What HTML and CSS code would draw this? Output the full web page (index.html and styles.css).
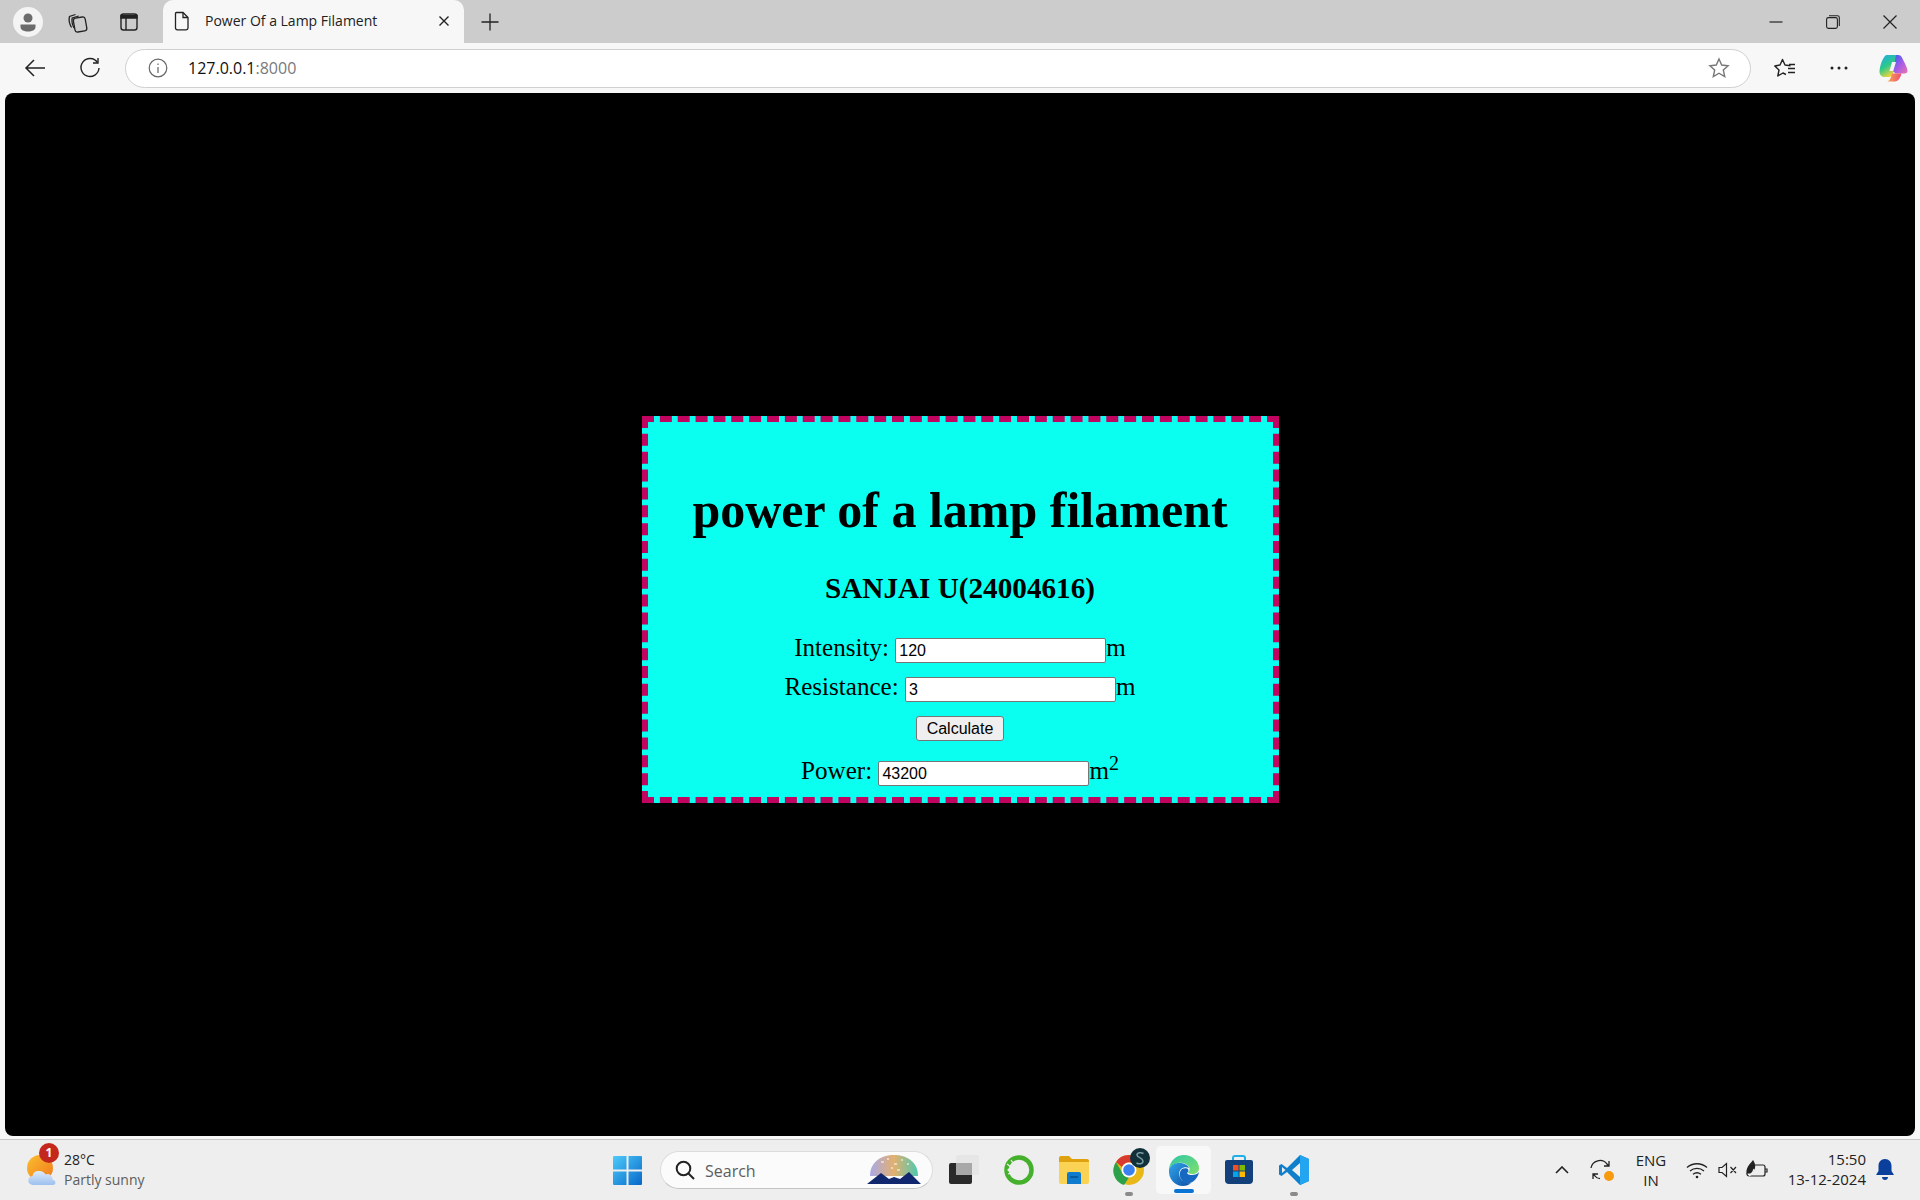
FILE: index.html
```html
<!DOCTYPE html>
<html lang="en">

<head>
  <meta charset="UTF-8">
  <title>Power Of a Lamp Filament</title>
  <link rel="stylesheet" href="styles.css">
</head>

<body>
  <div class="tabbar">
    <div class="avatar">
      <svg width="30" height="30" viewBox="0 0 30 30"><circle cx="15" cy="15" r="15" fill="#f4f4f4"/><circle cx="15" cy="11" r="4.5" fill="#6b6b6b"/><path d="M7.5 17.5h15v2.5c0 3-3.500 4.500-7.500 4.500s-7.500-1.500-7.500-4.500z" fill="#6b6b6b"/></svg>
    </div>
    <div class="tab-tool">
      <svg width="24" height="24" viewBox="0 0 24 24" fill="none" stroke="#222" stroke-width="1.300"><rect x="9" y="7.500" width="12" height="14" rx="2.500" transform="rotate(-10 15 14)"/><path d="M6.500 17.500C4.500 14 3.500 10 4.500 6.500l6-2M9 18c-1.500-3-2.500-7-1.800-10l6.500-2"/></svg>
    </div>
    <div class="tab-tool">
      <svg width="20" height="20" viewBox="0 0 20 20" fill="none" stroke="#222" stroke-width="1.400"><rect x="2" y="2" width="16" height="16" rx="2.500"/><path d="M2 3.500h16V6H2z" fill="#222"/><path d="M7 6v12"/></svg>
    </div>
    <div class="tab">
      <svg class="tab-icon" width="16" height="20" viewBox="0 0 16 20" fill="none" stroke="#222" stroke-width="1.300"><path d="M2.500 1.500h6.500l5 5v10.500a1.800 1.800 0 0 1-1.800 1.800H3.300A1.800 1.800 0 0 1 1.500 17V2.500a1 1 0 0 1 1-1z"/><path d="M9 1.500v5h5"/></svg>
      <span class="tab-title">Power Of a Lamp Filament</span>
      <svg width="12" height="12" viewBox="0 0 12 12" stroke="#222" stroke-width="1.400"><path d="M1.500 1.500l9 9M10.500 1.500l-9 9"/></svg>
    </div>
    <div class="new-tab">
      <svg width="18" height="18" viewBox="0 0 18 18" stroke="#222" stroke-width="1.300"><path d="M9 0.500v17M0.500 9h17"/></svg>
    </div>
    <div class="window-btns">
      <div class="window-btn"><svg width="14" height="14" viewBox="0 0 14 14" stroke="#222" stroke-width="1.200"><path d="M0.500 7h13"/></svg></div>
      <div class="window-btn"><svg width="14" height="14" viewBox="0 0 14 14" fill="none" stroke="#222" stroke-width="1.100"><rect x="0.600" y="2.600" width="10.800" height="10.800" rx="1.800"/><path d="M3 0.700h8.500a1.800 1.800 0 0 1 1.800 1.800V11"/></svg></div>
      <div class="window-btn"><svg width="14" height="14" viewBox="0 0 14 14" stroke="#222" stroke-width="1.200"><path d="M0.500 0.500l13 13M13.500 0.500l-13 13"/></svg></div>
    </div>
  </div>

  <div class="toolbar">
    <div class="nav-btn">
      <svg width="22" height="20" viewBox="0 0 22 20" fill="none" stroke="#222" stroke-width="1.500"><path d="M21 10H2M10 2l-8 8 8 8"/></svg>
    </div>
    <div class="nav-btn">
      <svg width="22" height="22" viewBox="0 0 22 22" fill="none" stroke="#222" stroke-width="1.400"><path d="M18.500 5.500A9 9 0 1 0 20 11"/><path d="M19 1v5h-5"/></svg>
    </div>
    <div class="address">
      <svg class="info-icon" width="20" height="20" viewBox="0 0 20 20" fill="none" stroke="#666" stroke-width="1.200"><circle cx="10" cy="10" r="8.800"/><path d="M10 9v6M10 5.500v1.500"/></svg>
      <span class="url">127.0.0.1<span class="port">:8000</span></span>
      <svg class="star" width="22" height="22" viewBox="0 0 22 22" fill="none" stroke="#777" stroke-width="1.400"><path d="M11 2l2.700 6 6.400.7-4.800 4.300 1.400 6.500L11 16.200 5.300 19.500l1.400-6.500L1.900 8.700 8.300 8z"/></svg>
    </div>
    <div class="tool-btn fav-btn">
      <svg width="22" height="20" viewBox="0 0 22 20" fill="none" stroke="#222" stroke-width="1.400"><path d="M16.500 7.700L11 7 8.500 1.500 6 7 .8 8 5 12l-1.200 6L9 15l3 1.500" stroke-linejoin="round"/><path d="M15 6.500h6M14 10.500h7M14 14.500h7"/></svg>
    </div>
    <div class="tool-btn">
      <svg width="18" height="4" viewBox="0 0 18 4" fill="#222"><circle cx="2" cy="2" r="1.500"/><circle cx="9" cy="2" r="1.500"/><circle cx="16" cy="2" r="1.500"/></svg>
    </div>
    <div class="tool-btn">
      <svg width="29" height="28" viewBox="0 0 29 28">
        <defs>
          <linearGradient id="cpa" x1="0" y1="0" x2="0.500" y2="1"><stop offset="0" stop-color="#1fa8f0"/><stop offset="0.550" stop-color="#2cc98a"/><stop offset="1" stop-color="#f2d43a"/></linearGradient>
          <linearGradient id="cpb" x1="0" y1="0" x2="1" y2="1"><stop offset="0" stop-color="#2a62ee"/><stop offset="0.500" stop-color="#a25be8"/><stop offset="1" stop-color="#ee72b0"/></linearGradient>
          <linearGradient id="cpc" x1="0" y1="0" x2="1" y2="0"><stop offset="0" stop-color="#f8a84a"/><stop offset="1" stop-color="#ee4f78"/></linearGradient>
        </defs>
        <path d="M8 1h10.500L14 20c-.6 2-2 3-4 3H6c-3.500 0-5.500-2-5.500-5.500C.5 14 2 9 3.500 6 5 3 6 1 8 1z" fill="url(#cpa)"/>
        <path d="M17 1h2c2 0 3.500 1 4.500 3.500 1.500 3.500 5 9 5 12.500 0 1.500-1 2.500-3 2.500h-9L14 17z" fill="url(#cpb)"/>
        <path d="M13 19.500h9.500c-1 4-3 8-6.500 8H8c2.500-.5 4-3 5-8z" fill="url(#cpc)"/>
        <path d="M13 8h4l-2.800 9H10.500z" fill="#f4f4f4"/>
      </svg>
    </div>
  </div>

  <div class="viewport">
    <div class="card">
      <h1>power of a lamp filament</h1>
      <h3>SANJAI U(24004616)</h3>
      <form class="calc">
        <div class="row">
          <label>Intensity:</label> <input type="text" value="120">m
        </div>
        <div class="row">
          <label>Resistance:</label> <input type="text" value="3">m
        </div>
        <div class="row">
          <button type="button">Calculate</button>
        </div>
        <div class="row row-result">
          <label>Power:</label> <input type="text" value="43200">m<sup>2</sup>
        </div>
      </form>
    </div>
  </div>

  <div class="taskbar">
    <div class="weather">
      <div class="weather-icon">
        <svg width="30" height="32" viewBox="0 0 30 32">
          <defs>
            <linearGradient id="sun" x1="0" y1="0" x2="1" y2="1"><stop offset="0" stop-color="#fbbf2e"/><stop offset="1" stop-color="#f0781e"/></linearGradient>
            <linearGradient id="cloud" x1="0" y1="0" x2="0" y2="1"><stop offset="0" stop-color="#dfeafa"/><stop offset="1" stop-color="#9cc0ee"/></linearGradient>
          </defs>
          <circle cx="13" cy="14" r="13" fill="url(#sun)"/>
          <path d="M6 31a4.500 4.500 0 0 1-.5-9 6 6 0 0 1 6-5 7 7 0 0 1 7 3.500 5 5 0 0 1 7 5c2 .5 3 2 3 3 0 1.500-1 2.500-2.500 2.500z" fill="url(#cloud)"/>
        </svg>
        <span class="badge">1</span>
      </div>
      <div class="weather-text">
        <div class="temp">28°C</div>
        <div class="sky">Partly sunny</div>
      </div>
    </div>

    <div class="task-center">
      <div class="task-icon">
        <svg width="29" height="29" viewBox="0 0 29 29">
          <defs><linearGradient id="win" x1="0" y1="0" x2="1" y2="1"><stop offset="0" stop-color="#4fcbfa"/><stop offset="1" stop-color="#0668c9"/></linearGradient></defs>
          <path d="M1 0h12.500v13.500H0V1a1 1 0 0 1 1-1zM15.500 0H28a1 1 0 0 1 1 1v12.500H15.500zM0 15.500h13.500V29H1a1 1 0 0 1-1-1zM15.500 15.500H29V28a1 1 0 0 1-1 1H15.500z" fill="url(#win)"/>
        </svg>
      </div>
      <div class="search">
        <svg width="20" height="20" viewBox="0 0 20 20" fill="none" stroke="#222" stroke-width="2"><circle cx="8.500" cy="8.500" r="6.800"/><path d="M13.500 13.500l5.500 5.500"/></svg>
        <span class="search-text">Search</span>
        <svg class="search-art" width="54" height="32" viewBox="0 0 54 32">
          <defs><linearGradient id="art" x1="0" y1="0" x2="1" y2="0"><stop offset="0" stop-color="#a9a8e8"/><stop offset="0.500" stop-color="#e3b06e"/><stop offset="1" stop-color="#4ec9b0"/></linearGradient></defs>
          <path d="M3 22C3 8 14 1 27 1s24 7 24 21z" fill="url(#art)"/>
          <path d="M0 30L14 19l8 6 5-2 6 2 9-7 12 12z" fill="#12286e"/>
          <path d="M14 8h3M20 5h2M27 10h3M34 6h2M40 10h2M24 14h2M30 16h3" stroke="#fff" stroke-width="1"/>
        </svg>
      </div>
      <div class="task-icon task-view">
        <svg width="30" height="30" viewBox="0 0 30 30"><rect x="0" y="8" width="23" height="21" rx="2" fill="#2a2a2a"/><rect x="7" y="0" width="23" height="20" rx="2" fill="#e4e4e4" opacity="0.900"/><rect x="7" y="8" width="16" height="12" fill="#a8a8a8"/></svg>
      </div>
      <div class="task-icon">
        <svg width="30" height="30" viewBox="0 0 30 30" fill="none"><circle cx="15" cy="15" r="12.500" stroke="#44b02c" stroke-width="4.500"/><path d="M3 9l4 3-3 3 3 3-3 1M7 5l2 3" stroke="#eee" stroke-width="1.300"/></svg>
      </div>
      <div class="task-icon">
        <svg width="30" height="28" viewBox="0 0 30 28"><path d="M0 2a2 2 0 0 1 2-2h8l3 3h15a2 2 0 0 1 2 2v3H0z" fill="#dfa10d"/><path d="M0 6h30v20a2 2 0 0 1-2 2H2a2 2 0 0 1-2-2z" fill="#fbd354"/><path d="M8 18a2 2 0 0 1 2-2h10a2 2 0 0 1 2 2v10H8z" fill="#0f7bcf"/><path d="M11 21h8" stroke="#0a4f8f" stroke-width="1.500"/></svg>
      </div>
      <div class="task-icon chrome-icon">
        <svg width="32" height="32" viewBox="0 0 32 32">
          <circle cx="16" cy="16" r="15" fill="#e8b818"/>
          <path d="M16 1a15 15 0 0 1 13 7.500H16a7.500 7.500 0 0 0-7 4.500L3 8A15 15 0 0 1 16 1z" fill="#d93a2e"/>
          <path d="M3 8l6.500 11.300A7.500 7.500 0 0 0 16 23.500L11 31A15 15 0 0 1 3 8z" fill="#2ba24a"/>
          <circle cx="16" cy="16" r="7.500" fill="#fff"/><circle cx="16" cy="16" r="5.800" fill="#3a80ee"/>
        </svg>
        <svg class="chrome-badge" width="20" height="20" viewBox="0 0 20 20"><circle cx="10" cy="10" r="10" fill="#12303a"/><path d="M13.500 5.500C11 4 7 4.500 7 7s6 3 6 6-4 3.500-6.500 2" fill="none" stroke="#7a9ca6" stroke-width="1.500"/></svg>
        <span class="running"></span>
      </div>
      <div class="task-icon active">
        <svg width="31" height="31" viewBox="0 0 31 31">
          <defs>
            <linearGradient id="ega" x1="0" y1="0" x2="1" y2="1"><stop offset="0" stop-color="#2fc6a8"/><stop offset="1" stop-color="#7fe06a"/></linearGradient>
            <linearGradient id="egb" x1="0" y1="0" x2="1" y2="1"><stop offset="0" stop-color="#32a6e8"/><stop offset="1" stop-color="#0a4fa8"/></linearGradient>
          </defs>
          <path d="M1 14C2 6 8 0 16 0c8 0 15 6 15 13 0 4-3 6-7 6-2 0-4-1-4-2 2-1 2-3 1-5-2-3-6-5-11-4-4 1-8 3-9 6z" fill="url(#ega)"/>
          <path d="M1 14c2-4 6-6 10-6 5 0 9 2 10 5-2-1-6-1-8 1-3 3-2 8 1 11 2 2 5 4 9 3-2 2-5 3-8 3C7 31 0 24 1 14z" fill="url(#egb)"/>
          <path d="M14 25c-3-3-3-8 0-11 2-1 5-1 6 0 1 2 0 3-1 4 1 2 3 2 5 2 3 0 6-1 7-3-1 7-8 13-14 11-1 0-2-1-3-3z" fill="#1668c0"/>
        </svg>
        <span class="running running-active"></span>
      </div>
      <div class="task-icon">
        <svg width="30" height="30" viewBox="0 0 30 30">
          <path d="M9 6V3a2 2 0 0 1 2-2h8a2 2 0 0 1 2 2v3" fill="none" stroke="#1fb0e8" stroke-width="2"/>
          <path d="M1 7a2 2 0 0 1 2-2h24a2 2 0 0 1 2 2v18a4 4 0 0 1-4 4H5a4 4 0 0 1-4-4z" fill="#12407a"/>
          <rect x="9" y="10" width="5.500" height="5.500" fill="#f25022"/><rect x="15.500" y="10" width="5.500" height="5.500" fill="#7fba00"/><rect x="9" y="16.500" width="5.500" height="5.500" fill="#00a4ef"/><rect x="15.500" y="16.500" width="5.500" height="5.500" fill="#ffb900"/>
        </svg>
      </div>
      <div class="task-icon">
        <svg width="30" height="30" viewBox="0 0 30 30">
          <path d="M21 0l9 4v22l-9 4L8 17l-5.500 4L0 19.500v-9L2.500 9 8 13z" fill="#0f7fcb"/>
          <path d="M21 0l9 4v22l-9 4z" fill="#23a6ef"/>
          <path d="M21 8l-8 7 8 7z" fill="#eee"/>
          <path d="M3 12l3.500 3L3 18z" fill="#eee"/>
        </svg>
        <span class="running"></span>
      </div>
    </div>

    <div class="tray">
      <svg class="tray-chevron" width="14" height="8" viewBox="0 0 14 8" fill="none" stroke="#222" stroke-width="1.600"><path d="M1 7l6-6 6 6"/></svg>
      <div class="tray-sync">
        <svg width="22" height="22" viewBox="0 0 22 22" fill="none" stroke="#222" stroke-width="1.300"><path d="M1 9a9 9 0 0 1 16-4l2 2M19 2v5h-5M3 15l2 2c1 1.500 3 2.500 5 2.700M3 20v-5h5"/></svg>
        <span class="sync-dot"></span>
      </div>
      <div class="lang">ENG<br>IN</div>
      <svg class="tray-icon wifi" width="22" height="18" viewBox="0 0 22 18" fill="none" stroke="#222" stroke-width="1.300"><path d="M1 6.500c5.500-5 14.500-5 20 0M4 10c4-3.500 10-3.500 14 0M7 13.200c2.500-1.800 5.500-1.800 8 0"/><circle cx="11" cy="16" r="1.300" fill="#222" stroke="none"/></svg>
      <svg class="tray-icon mute" width="20" height="16" viewBox="0 0 20 16" fill="none" stroke="#222" stroke-width="1.200"><path d="M1 5.500h3l4.500-4v13l-4.500-4H1zM12.500 5l5.500 6M18 5l-5.500 6"/></svg>
      <svg class="tray-icon battery" width="22" height="20" viewBox="0 0 22 20" fill="none" stroke="#222" stroke-width="1.200"><path d="M9 5h8a2 2 0 0 1 2 2v7a2 2 0 0 1-2 2H3a2 2 0 0 1-2-2v-1M19.500 9h1.500v3h-1.500"/><path d="M1 12C1 6 5 4 7 1c2 3 2 7 0 10l-3 2h-3z" fill="#222"/><path d="M3 16c2-1 4-4 5-7" stroke="#eee"/></svg>
      <div class="clock">
        <div>15:50</div>
        <div>13-12-2024</div>
      </div>
      <svg class="bell" width="18" height="22" viewBox="0 0 18 22"><path d="M9 0c4 0 6.500 3 6.500 7v5l2.500 4H0l2.500-4V7C2.500 3 5 0 9 0z" fill="#0b3f9c"/><path d="M6 18h6c0 1.800-1.300 3-3 3s-3-1.200-3-3z" fill="#0b3f9c"/></svg>
    </div>
  </div>
</body>

</html>
```

FILE: styles.css
```css
* {
  padding: 0;
  margin: 0;
  box-sizing: border-box;
}

html,
body {
  height: 100%;
}

body {
  width: 1920px;
  height: 1200px;
  display: flex;
  flex-direction: column;
  overflow: hidden;
  background: #f7f7f7;
  font-family: "Open Sans", "Noto Sans", sans-serif;
  color: #222;
}

svg {
  display: block;
  flex: none;
}

/* browser tabs */
.tabbar {
  height: 43px;
  display: flex;
  align-items: center;
  background: #cccccc;
  padding: 0 2px 0 13px;
}

.avatar {
  width: 30px;
}

.tab-tool {
  width: 52px;
  margin-left: 8px;
  display: flex;
  justify-content: center;
}

.tab-tool+.tab-tool {
  margin-left: 0;
}

.tab {
  width: 301px;
  height: 43px;
  margin-left: 8px;
  padding: 0 14px 2px 11px;
  display: flex;
  align-items: center;
  background: #f7f7f7;
  border-radius: 10px 10px 0 0;
  font-size: 14px;
}

.tab-title {
  flex: 1;
  margin-left: 15px;
}

.new-tab {
  margin-left: 17px;
}

.window-btns {
  margin-left: auto;
  display: flex;
}

.window-btn {
  width: 57px;
  display: flex;
  justify-content: center;
}

/* address bar row */
.toolbar {
  height: 50px;
  display: flex;
  align-items: center;
  padding-left: 13px;
  background: #f7f7f7;
}

.nav-btn {
  flex: none;
  width: 44px;
  margin-right: 11px;
  display: flex;
  justify-content: center;
}

.address {
  flex: none;
  width: 1626px;
  height: 39px;
  margin-left: 2px;
  display: flex;
  align-items: center;
  padding: 0 20px 0 22px;
  background: #fff;
  border: 1px solid #d0d0d0;
  border-radius: 20px;
}

.url {
  margin-left: 20px;
  font-family: "Open Sans", sans-serif;
  font-size: 16px;
  color: #111;
}

.port {
  color: #77797c;
}

.star {
  margin-left: auto;
}

.tool-btn {
  flex: none;
  width: 54px;
  display: flex;
  justify-content: center;
}

.fav-btn {
  margin-left: 7px;
}

/* the page itself */
.viewport {
  flex: 1;
  margin: 0 5px 3px;
  padding-bottom: 11px;
  display: flex;
  align-items: center;
  justify-content: center;
  background: #000;
  border-radius: 8px;
}

.card {
  width: 637px;
  height: 387px;
  padding-top: 59px;
  background: #0afff0;
  border: 6px dashed #c0045f;
  text-align: center;
  font-family: "Liberation Serif", serif;
  color: #000;
}

.card h1 {
  font-size: 50px;
  line-height: 58px;
}

.card h3 {
  margin-top: 32px;
  font-size: 29.200px;
  line-height: 34px;
}

.calc {
  margin-top: 23px;
}

.row {
  height: 39px;
  font-size: 25.100px;
  line-height: 39px;
}

.row-result {
  margin-top: 6px;
}

.row input {
  width: 211px;
  height: 25px;
  padding: 1px 3px;
  border: 1px solid #767676;
  border-radius: 2px;
  background: #fff;
  font-family: "Liberation Sans", sans-serif;
  font-size: 16px;
  color: #000;
}

.row button {
  width: 88px;
  height: 25px;
  border: 1px solid #767676;
  border-radius: 3px;
  background: #efefef;
  font-family: "Liberation Sans", sans-serif;
  font-size: 16px;
  color: #000;
}

.row sup {
  font-size: 20px;
  line-height: 0;
}

/* windows taskbar */
.taskbar {
  height: 61px;
  display: flex;
  align-items: center;
  position: relative;
  background: #eeeeee;
  border-top: 1px solid #c8c8c8;
}

.weather {
  width: 500px;
  padding-left: 27px;
  display: flex;
  align-items: center;
}

.weather-icon {
  width: 37px;
  position: relative;
}

.badge {
  position: absolute;
  top: -11px;
  left: 12px;
  width: 20px;
  height: 20px;
  border-radius: 50%;
  background: #c4281c;
  color: #fff;
  font-size: 12px;
  font-weight: 700;
  line-height: 20px;
  text-align: center;
}

.weather-text {
  font-size: 14px;
  line-height: 20px;
}

.sky {
  color: #5d5d5d;
}

.task-center {
  position: absolute;
  left: 600px;
  top: 0;
  height: 60px;
  display: flex;
  align-items: center;
}

.task-icon {
  width: 55px;
  height: 48px;
  display: flex;
  align-items: center;
  justify-content: center;
  position: relative;
}

.search {
  width: 273px;
  height: 38px;
  margin-left: 5px;
  display: flex;
  align-items: center;
  padding: 0 11px 0 14px;
  background: #fbfbfb;
  border: 1px solid #dcdcdc;
  border-bottom-color: #c4c4c4;
  border-radius: 19px;
}

.search-text {
  margin-left: 10px;
  padding-top: 1px;
  font-size: 16px;
  color: #5d5d5d;
}

.search-art {
  margin-left: auto;
}

.task-view {
  margin-left: 3px;
}

.active {
  background: #f8f8f8;
  border-radius: 5px;
}

.chrome-badge {
  position: absolute;
  top: 2px;
  right: 6px;
}

.running {
  position: absolute;
  bottom: -2px;
  left: 50%;
  width: 8px;
  height: 4px;
  margin-left: -4px;
  border-radius: 2px;
  background: #8a8a8a;
}

.running-active {
  bottom: 1px;
  width: 20px;
  margin-left: -10px;
  background: #0a74d4;
}

.tray {
  margin-left: auto;
  display: flex;
  align-items: center;
  padding-right: 26px;
  font-size: 15px;
}

.tray-sync {
  position: relative;
  margin-left: 21px;
}

.sync-dot {
  position: absolute;
  right: -2px;
  bottom: 0;
  width: 10px;
  height: 10px;
  border-radius: 50%;
  background: #f79a0e;
}

.lang {
  width: 40px;
  margin-left: 19px;
  text-align: center;
  line-height: 20px;
}

.wifi {
  margin-left: 15px;
}

.mute {
  margin-left: 10px;
}

.battery {
  margin-left: 8px;
}

.clock {
  width: 98px;
  margin-bottom: 2px;
  text-align: right;
  line-height: 20px;
}

.bell {
  margin-left: 10px;
}
```
